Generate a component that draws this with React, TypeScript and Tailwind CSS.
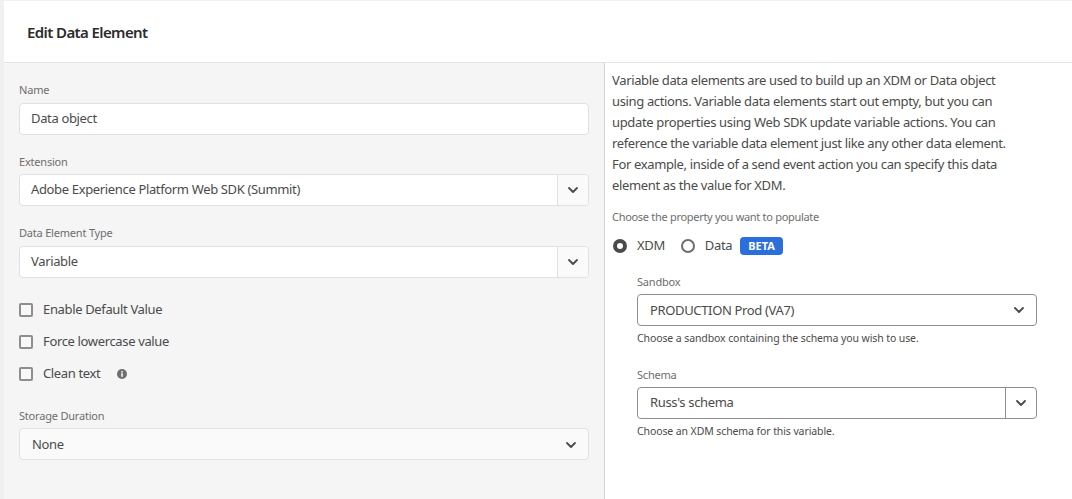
import { ChevronDown } from 'lucide-react';

const font = "font-['Noto_Sans',sans-serif]";
const body = 'text-[13px] tracking-[-0.35px] text-[#4b4b4b]';

const Chevron = () => <ChevronDown size={16} strokeWidth={2.75} className="text-[#4b4b4b]" />;

const Label = ({ children, className = '' }: { children: string; className?: string }) => (
    <div className={`h-[14px] text-[11px] leading-[14px] tracking-[-0.2px] text-[#6e6e6e] ${className}`}>{children}</div>
);

const Field = ({ children }: { children: string }) => (
    <div className={`h-8 w-[570px] rounded border border-[#e1e1e1] bg-white pl-[11px] leading-[28px] ${body}`}>
        {children}
    </div>
);

const ComboBox = ({ value }: { value: string }) => (
    <div className={`flex h-8 w-[570px] rounded border border-[#e1e1e1] bg-white leading-[28px] ${body}`}>
        <div className="flex-1 pl-[11px]">{value}</div>
        <div className="flex w-[31px] items-center justify-center rounded-r border-l border-[#e1e1e1] bg-[#fafafa]">
            <Chevron />
        </div>
    </div>
);

const Check = ({ label, info }: { label: string; info?: boolean }) => (
    <div className={`flex h-8 items-center ${body}`}>
        <div className="size-[14px] rounded-[2px] border-2 border-[#8e8e8e] bg-[#f8f8f8]" />
        <span className="ml-[10px]">{label}</span>
        {info && (
            <svg viewBox="0 0 10 10" className="ml-[17px] size-[10px]">
                <circle cx="5" cy="5" r="5" fill="#6e6e6e" />
                <rect x="4.2" y="4.2" width="1.6" height="3.6" fill="#f5f5f5" />
                <rect x="4.2" y="2.1" width="1.6" height="1.4" fill="#f5f5f5" />
            </svg>
        )}
    </div>
);

const Select = ({ value, split }: { value: string; split?: boolean }) => (
    <div className={`flex h-8 w-[400px] rounded border border-[#8e8e8e] bg-white ${split ? 'leading-[28px]' : 'leading-[30px]'} ${body}`}>
        <div className="flex-1 pl-3">{value}</div>
        <div className={`flex w-[31px] items-center justify-center ${split ? 'border-l border-[#8e8e8e]' : 'pr-1'}`}>
            <Chevron />
        </div>
    </div>
);

export default function App() {
    return (
        <div className={`h-[499px] w-[1072px] overflow-hidden bg-[#f0f0f0] pt-px pl-[4px] ${font}`}>
            <div className="flex h-[62px] items-center border-b border-[#e4e4e4] bg-white pt-px pl-[23px] text-[15px] font-semibold tracking-[-0.6px] text-[#2c2c2c]">
                Edit Data Element
            </div>
            <div className="flex h-[436px]">
                <div className="w-[601px] border-r border-[#d5d5d5] bg-[#f5f5f5] pl-[15px] pt-5">
                    <Label className="mb-[6px]">Name</Label>
                    <Field>Data object</Field>
                    <Label className="mt-[20px] mb-[5px]">Extension</Label>
                    <ComboBox value="Adobe Experience Platform Web SDK (Summit)" />
                    <Label className="mt-5 mb-[6px]">Data Element Type</Label>
                    <ComboBox value="Variable" />
                    <div className="mt-[16px]">
                        <Check label="Enable Default Value" />
                        <Check label="Force lowercase value" />
                        <Check label="Clean text" info />
                    </div>
                    <Label className="mt-[19px] mb-[5px]">Storage Duration</Label>
                    <div className={`flex h-8 w-[570px] items-center justify-between rounded border border-[#e1e1e1] bg-[#fafafa] pt-px pr-[9px] pl-3 ${body}`}>
                        None
                        <Chevron />
                    </div>
                </div>
                <div className="flex-1 bg-white pl-[7px] pt-[7px]">
                    <p className={`w-[400px] leading-[21px] ${body}`}>
                        Variable data elements are used to build up an XDM or Data object using actions. Variable data elements start out empty, but you can update properties using Web SDK update variable actions. You can reference the variable data element just like any other data element. For example, inside of a send event action you can specify this data element as the value for XDM.
                    </p>
                    <div className="mt-[13px] text-[11px] leading-4 tracking-[-0.3px] text-[#6e6e6e]">Choose the property you want to populate</div>
                    <div className={`mt-[9px] flex h-6 items-center ${body}`}>
                        <div className="ml-px size-[14px] rounded-full border-[4px] border-[#4b4b4b] bg-white" />
                        <span className="ml-[10px]">XDM</span>
                        <div className="ml-4 size-[14px] rounded-full border-2 border-[#6e6e6e] bg-white" />
                        <span className="ml-[10px]">Data</span>
                        <span className="ml-[8px] rounded bg-[#2a6fdc] px-2 text-[11px] leading-[18px] font-bold tracking-normal text-white">BETA</span>
                    </div>
                    <div className="pl-[25px]">
                        <Label className="mt-[17px] mb-[5px]">Sandbox</Label>
                        <Select value="PRODUCTION Prod (VA7)" />
                        <div className="mt-[5px] text-[10.5px] leading-[14px] tracking-[-0.1px] text-[#4b4b4b]">Choose a sandbox containing the schema you wish to use.</div>
                        <Label className="mt-[23px] mb-[5px]">Schema</Label>
                        <Select value="Russ's schema" split />
                        <div className="mt-[5px] text-[10.5px] leading-[14px] tracking-[-0.1px] text-[#4b4b4b]">Choose an XDM schema for this variable.</div>
                    </div>
                </div>
            </div>
        </div>
    );
}
